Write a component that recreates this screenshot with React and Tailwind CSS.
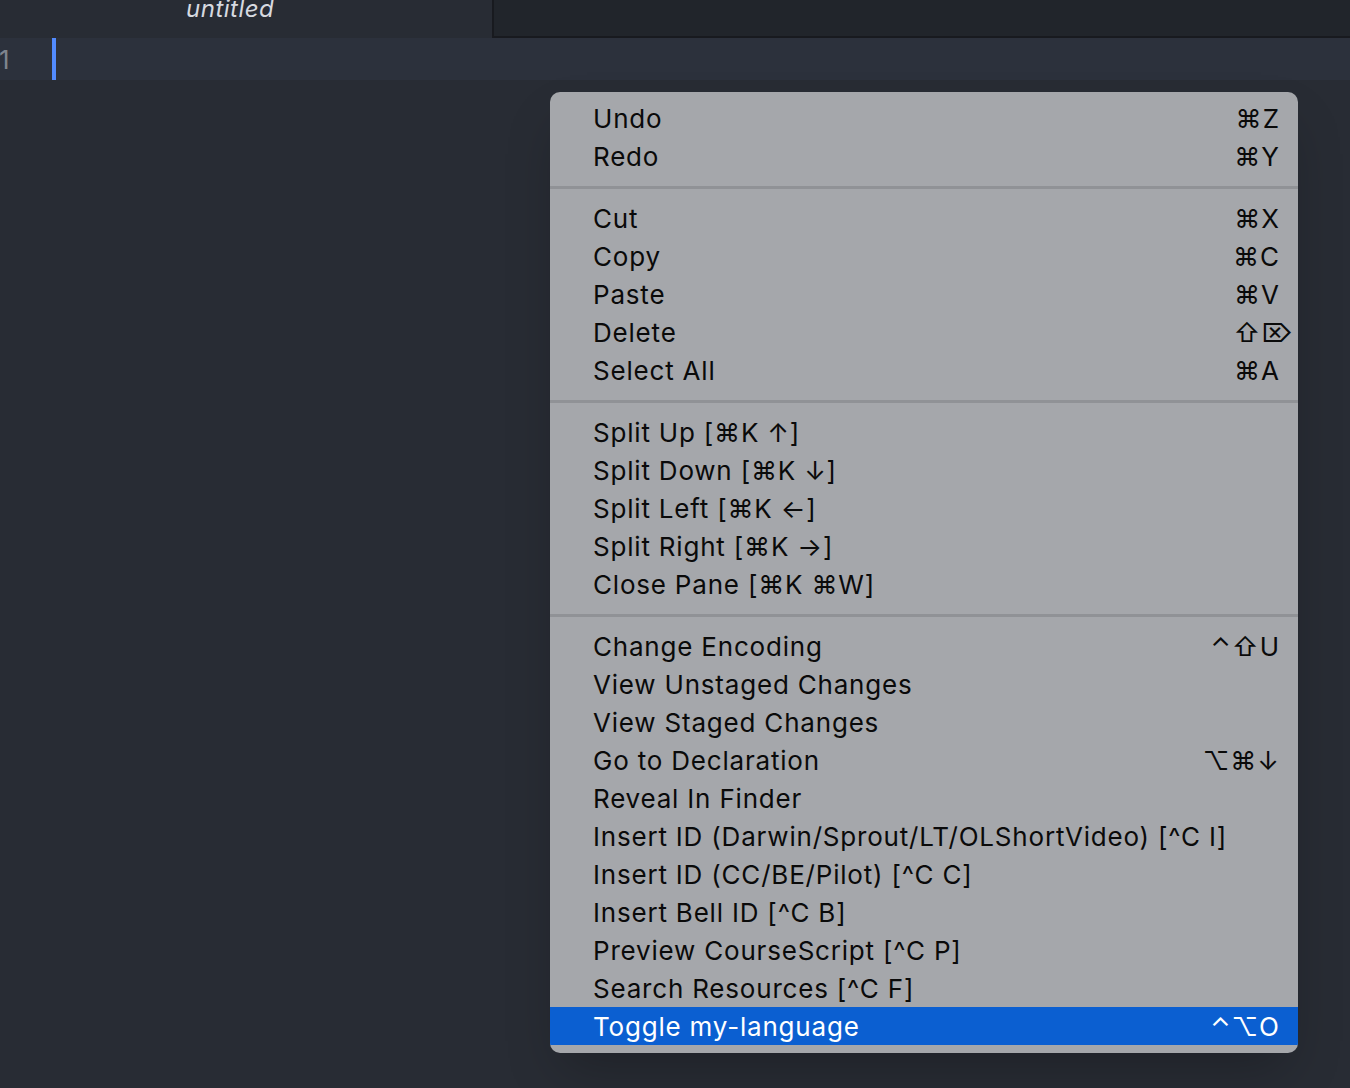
import React from "react";

const groups = [
  [
    { label: "Undo", keys: "⌘Z" },
    { label: "Redo", keys: "⌘Y" },
  ],
  [
    { label: "Cut", keys: "⌘X" },
    { label: "Copy", keys: "⌘C" },
    { label: "Paste", keys: "⌘V" },
    { label: "Delete", keys: "⇧⌦", wide: true },
    { label: "Select All", keys: "⌘A" },
  ],
  [
    { label: "Split Up [⌘K ↑]" },
    { label: "Split Down [⌘K ↓]" },
    { label: "Split Left [⌘K ←]" },
    { label: "Split Right [⌘K →]" },
    { label: "Close Pane [⌘K ⌘W]" },
  ],
  [
    { label: "Change Encoding", keys: "⌃⇧U" },
    { label: "View Unstaged Changes" },
    { label: "View Staged Changes" },
    { label: "Go to Declaration", keys: "⌥⌘↓" },
    { label: "Reveal In Finder" },
    { label: "Insert ID (Darwin/Sprout/LT/OLShortVideo) [^C I]" },
    { label: "Insert ID (CC/BE/Pilot) [^C C]" },
    { label: "Insert Bell ID [^C B]" },
    { label: "Preview CourseScript [^C P]" },
    { label: "Search Resources [^C F]" },
    { label: "Toggle my-language", keys: "⌃⌥O", active: true },
  ],
];

const MenuItem = ({ item }) => (
  <div
    className={`flex items-center justify-between h-[38px] pl-[43px] pr-[18px] ${
      item.active ? "bg-[#0b5fd1] text-white" : "text-[#0a0a0a]"
    }`}
  >
    <span className="whitespace-nowrap tracking-[0.8px]">{item.label}</span>
    {item.keys && (
      <span
        className={`whitespace-nowrap tracking-[1px] ${item.wide ? "-mr-[14px]" : ""}`}
      >
        {item.keys}
      </span>
    )}
  </div>
);

export default function App() {
  return (
    <div
      className="relative w-[1350px] h-[1088px] overflow-hidden bg-[#282c34]"
      style={{ fontFamily: "Inter, 'Noto Sans', 'DejaVu Sans', sans-serif" }}
    >
      {/* tab bar */}
      <div className="flex h-[38px]">
        <div className="w-[492px] bg-[#282c34] pl-[186px] -mt-[9px]">
          <span className="italic text-[24px] tracking-[0.5px] text-[#d7dae0]">untitled</span>
        </div>
        <div className="flex-1 bg-[#21252b] border-l-2 border-b-2 border-[#181a1f]" />
      </div>

      {/* line 1 */}
      <div className="flex h-[42px] bg-[#2c313c]">
        <div className="w-[52px] flex items-center">
          <span className="-ml-[1px] text-[26px] text-[#7f848e]">1</span>
        </div>
        <div className="w-[4px] bg-[#528bff]" />
      </div>

      {/* context menu */}
      <div className="absolute left-[550px] top-[92px] w-[748px] rounded-[10px] bg-[#a5a7ab] pt-[7px] pb-[8px] text-[26px] shadow-2xl overflow-hidden">
        {groups.map((g, i) => (
          <div key={i}>
            {i > 0 && <div className="h-[3px] bg-[#909296] mt-[11px] mb-[10px]" />}
            {g.map((item) => (
              <MenuItem key={item.label} item={item} />
            ))}
          </div>
        ))}
      </div>
    </div>
  );
}
